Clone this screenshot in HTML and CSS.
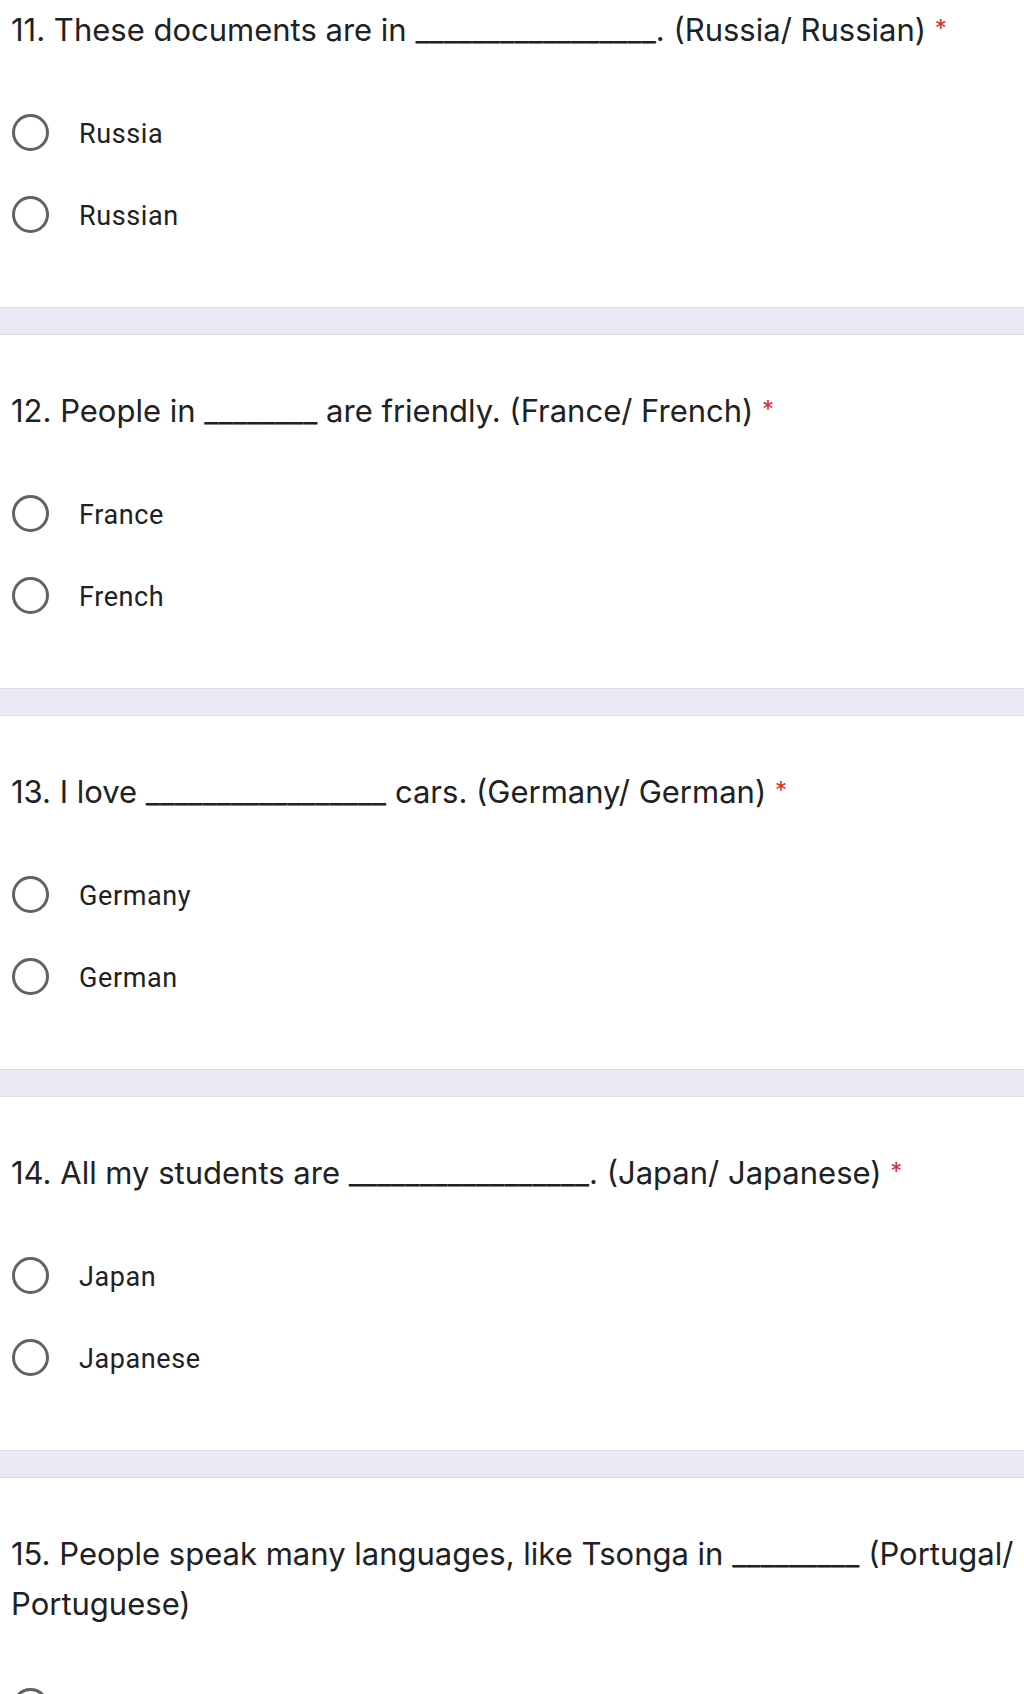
FILE: index.html
```html
<!DOCTYPE html>
<html>
<head>
<meta charset="utf-8">
<link rel="stylesheet" href="styles.css">
</head>
<body>
<div class="form">
  <section class="question first">
    <div class="title">11. These documents are in <span class="blank">_________________</span>. (Russia/ Russian) <span class="req">*</span></div>
    <div class="options">
      <div class="option"><span class="radio"></span><span class="label">Russia</span></div>
      <div class="option"><span class="radio"></span><span class="label">Russian</span></div>
    </div>
  </section>
  <div class="band"></div>
  <section class="question">
    <div class="title">12. People in <span class="blank">________</span> are friendly. (France/ French) <span class="req">*</span></div>
    <div class="options">
      <div class="option"><span class="radio"></span><span class="label">France</span></div>
      <div class="option"><span class="radio"></span><span class="label">French</span></div>
    </div>
  </section>
  <div class="band"></div>
  <section class="question">
    <div class="title">13. I love <span class="blank">_________________</span> cars. (Germany/ German) <span class="req">*</span></div>
    <div class="options">
      <div class="option"><span class="radio"></span><span class="label">Germany</span></div>
      <div class="option"><span class="radio"></span><span class="label">German</span></div>
    </div>
  </section>
  <div class="band"></div>
  <section class="question">
    <div class="title">14. All my students are <span class="blank">_________________</span>. (Japan/ Japanese) <span class="req">*</span></div>
    <div class="options">
      <div class="option"><span class="radio"></span><span class="label">Japan</span></div>
      <div class="option"><span class="radio"></span><span class="label">Japanese</span></div>
    </div>
  </section>
  <div class="band"></div>
  <section class="question">
    <div class="title">15. People speak many languages, like Tsonga in <span class="blank">_________</span> (Portugal/ Portuguese)</div>
    <div class="options">
      <div class="option"><span class="radio"></span><span class="label">Portugal</span></div>
      <div class="option"><span class="radio"></span><span class="label">Portuguese</span></div>
    </div>
  </section>
</div>
</body>
</html>
```

FILE: styles.css
```css
html, body {
  margin: 0;
  padding: 0;
  background: #ffffff;
}
body {
  width: 1024px;
  height: 1694px;
  overflow: hidden;
  font-family: Roboto, "Liberation Sans", sans-serif;
  color: #202124;
}
.question {
  padding: 51px 0 52px 11px;
}
.question.first {
  padding-top: 5px;
}
.title {
  font-family: Inter, Roboto, sans-serif;
  font-size: 31px;
  line-height: 50px;
  letter-spacing: 0;
  color: #202124;
}
.blank {
  letter-spacing: 0;
}
.req {
  color: #d93025;
  font-size: 24px;
  line-height: 0;
  vertical-align: 4px;
}
.options {
  margin-top: 36px;
  display: flex;
  flex-direction: column;
}
.option {
  height: 82px;
  display: flex;
  align-items: center;
}
.radio {
  width: 31px;
  height: 31px;
  border: 3px solid #5f6368;
  border-radius: 50%;
  flex: none;
  margin-left: 1px;
}
.label {
  margin-left: 30px;
  padding-top: 4px;
  font-size: 27px;
  letter-spacing: 0.6px;
  color: #202124;
}
.band {
  height: 26px;
  background: #ece9f6;
  border-top: 1px solid #dcdce2;
  border-bottom: 1px solid #dcdce2;
}
```
